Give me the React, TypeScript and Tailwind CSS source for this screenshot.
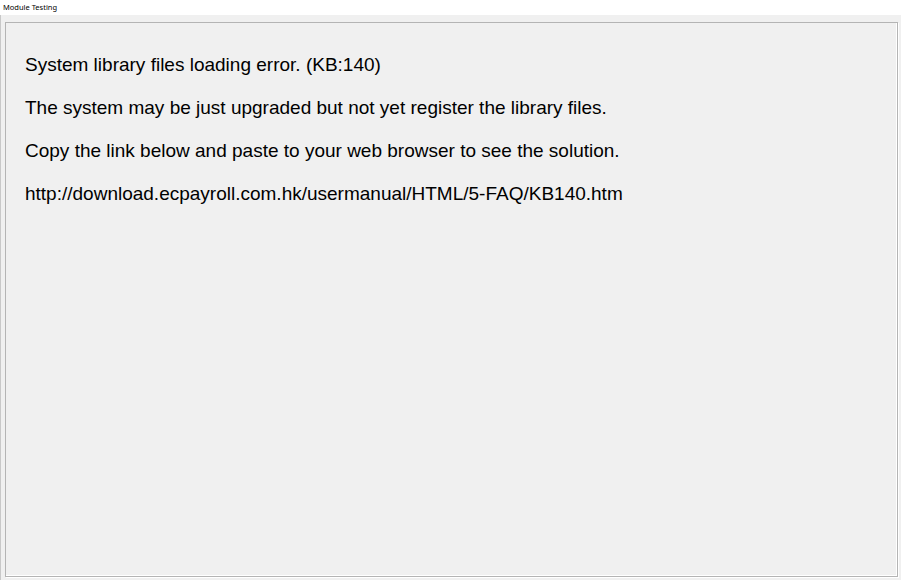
export default function App() {
  const lines = [
    "System library files loading error. (KB:140)",
    "The system may be just upgraded but not yet register the library files.",
    "Copy the link below and paste to your web browser to see the solution.",
    "http://download.ecpayroll.com.hk/usermanual/HTML/5-FAQ/KB140.htm",
  ];

  return (
    <div className="w-[901px] h-[580px] bg-[#f0f0f0] flex flex-col font-['Liberation_Sans',Arial,sans-serif] overflow-hidden">
      {/* Title */}
      <div className="h-[15px] bg-white text-[7.5px] leading-[14px] pl-[3px] text-black font-['Noto_Sans',sans-serif]">
        Module Testing
      </div>

      {/* Body */}
      <div className="flex-1 border-l border-[#c8c8c8] pt-[7px] pl-[4px] pr-[3px] pb-[3px] flex">
        <div className="flex-1 border border-[#b4b4b4] shadow-[inset_-1px_-1px_0_#ffffff,1px_1px_0_#ffffff] pt-[31px] pl-[19px] flex flex-col gap-[21px]">
          {lines.map((t, i) => (
            <p key={i} className="text-[19px] leading-[22px] text-black">
              {t}
            </p>
          ))}
        </div>
      </div>
    </div>
  );
}
